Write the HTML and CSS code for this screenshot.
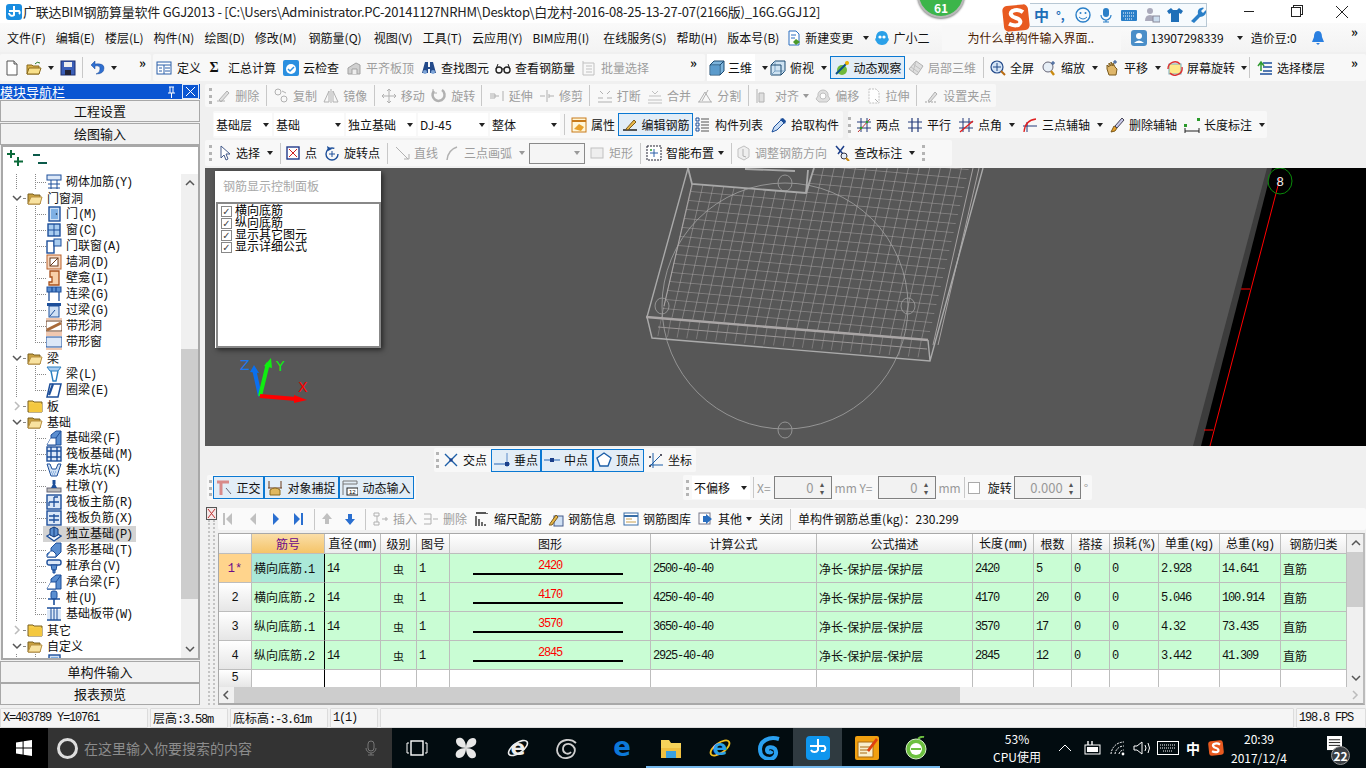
FILE: index.html
```html
<!DOCTYPE html>
<html lang="zh-CN">
<head>
<meta charset="utf-8">
<title>广联达BIM钢筋算量软件 GGJ2013</title>
<link rel="stylesheet" href="styles.css">
</head>
<body>
<svg class="defs" xmlns="http://www.w3.org/2000/svg">
<symbol id="logo" viewBox="0 0 16 16"><rect width="16" height="16" rx="3" fill="#1a8de0"/><path d="M8 2v9a3 3 0 0 1-5-2M3 7h10a2 2 0 0 1 0 3" fill="none" stroke="#fff" stroke-width="2"/></symbol>
<symbol id="doc" viewBox="0 0 16 16"><path d="M3 1h7l3 3v11H3z" fill="#fff" stroke="#555"/><path d="M10 1v3h3" fill="#ddd" stroke="#555"/></symbol>
<symbol id="open" viewBox="0 0 16 16"><path d="M1 5h5l1 1h6v8H1z" fill="#d9b24c" stroke="#8a6a1c"/><path d="M3 8h12l-2 6H1z" fill="#f8e08a" stroke="#8a6a1c"/><path d="M9 4q2-3 5-1" stroke="#2a7a2a" fill="none"/></symbol>
<symbol id="save" viewBox="0 0 16 16"><rect x="1" y="1" width="14" height="14" fill="#3b5fb8" stroke="#1d2f70"/><rect x="4" y="2" width="8" height="5" fill="#eee"/><rect x="5" y="10" width="6" height="5" fill="#223"/></symbol>
<symbol id="undo" viewBox="0 0 16 16"><path d="M6 1 2 5l4 4V6q5-1 5 3t-4 5q8 0 8-6 0-5-9-4z" fill="#2f6fd0" stroke="#1a4a9a" stroke-width=".5"/></symbol>
<symbol id="define" viewBox="0 0 16 16"><rect x="1" y="2" width="14" height="12" fill="#fff" stroke="#2a5fa8"/><path d="M1 5h14M8 5v9M9 8h5M9 11h5M3 8h3M3 11h3" stroke="#2a5fa8"/></symbol>
<symbol id="cloud" viewBox="0 0 16 16"><rect width="16" height="16" rx="2" fill="#2a8fe0"/><circle cx="8" cy="9" r="5" fill="#fff"/><path d="M5 9l2 2 4-4" fill="none" stroke="#2a8fe0" stroke-width="1.5"/></symbol>
<symbol id="align" viewBox="0 0 16 16"><path d="M2 14V8l8-5 4 2v9z" fill="#ccc" stroke="#999"/><path d="M6 14V9h5v5" fill="#eee" stroke="#999"/></symbol>
<symbol id="bino" viewBox="0 0 16 16"><path d="M4 2h3v5h2V2h3l3 11h-6V9H7v4H1z" fill="#234a8a"/><circle cx="4" cy="12" r="2" fill="#7fa6d8"/><circle cx="12" cy="12" r="2" fill="#7fa6d8"/></symbol>
<symbol id="glass" viewBox="0 0 16 16"><circle cx="4" cy="10" r="3" fill="none" stroke="#222" stroke-width="1.4"/><circle cx="12" cy="10" r="3" fill="none" stroke="#222" stroke-width="1.4"/><path d="M7 9h2M1 9l2-5M15 9l-2-5" stroke="#222" fill="none"/></symbol>
<symbol id="batch" viewBox="0 0 16 16"><path d="M2 1v14M2 3h11v12H2M5 6h6M5 9h6M5 12h6" fill="none" stroke="#bbb"/></symbol>
<symbol id="cube" viewBox="0 0 16 16"><path d="M1 5l4-4h10v10l-4 4H1z" fill="#7db4dc" stroke="#1d4a70"/><path d="M1 5h10v10M11 5l4-4" fill="none" stroke="#1d4a70"/><rect x="1.5" y="5.5" width="9" height="9" fill="#5b9bcc"/></symbol>
<symbol id="top" viewBox="0 0 16 16"><path d="M1 5l4-4h10v10l-4 4H1z" fill="#cfe3f2" stroke="#1d4a70"/><path d="M5 1v10H15M5 11l-4 4" fill="none" stroke="#7ca3c4"/><path d="M1 5h10v10" fill="none" stroke="#1d4a70"/></symbol>
<symbol id="orbit" viewBox="0 0 16 16"><circle cx="8" cy="10" r="5" fill="#6fb93a"/><path d="M2 14L14 2" stroke="#0a4e8a" stroke-width="2"/><circle cx="13" cy="3" r="2" fill="#f0b400"/></symbol>
<symbol id="cube3" viewBox="0 0 16 16"><path d="M8 1l7 5-6 9-8-6z" fill="#ddd" stroke="#aaa"/><path d="M5 4l7 5M3 7l7 5M8 1L5 12" stroke="#bbb" fill="none"/></symbol>
<symbol id="full" viewBox="0 0 16 16"><circle cx="7" cy="7" r="6" fill="#d4e4f6" stroke="#234a8a" stroke-width="1.2"/><path d="M7 3v8M3 7h8" stroke="#234a8a"/><path d="M11 11l4 4" stroke="#b86a10" stroke-width="2"/></symbol>
<symbol id="zoomi" viewBox="0 0 16 16"><circle cx="7" cy="7" r="5" fill="#e6eef6" stroke="#667"/><path d="M10 11l3 4" stroke="#c98a10" stroke-width="2.4"/><path d="M12 1v4M10 3h4" stroke="#234a8a"/></symbol>
<symbol id="hand" viewBox="0 0 16 16"><path d="M3 9V5l2 2V3l2 3V2l2 4V3l2 4 2 2-1 6H5z" fill="#dfb66a" stroke="#7a5a1c"/><path d="M11 0v4M9 2h4" stroke="#234a8a"/></symbol>
<symbol id="rotscr" viewBox="0 0 16 16"><rect x="2" y="4" width="12" height="10" fill="#ffe88a" stroke="#7ab"/><path d="M1 9a7 7 0 0 1 12-5M15 7a7 7 0 0 1-12 6" fill="none" stroke="#e03030" stroke-width="1.4"/></symbol>
<symbol id="floors" viewBox="0 0 16 16"><path d="M6 3h9M6 7h9M6 11h9M3 14h12" stroke="#1d4f9a" stroke-width="1.6"/><path d="M4 2v9M1 6l3-4 3 4" fill="none" stroke="#2f9a2f" stroke-width="1.5"/></symbol>
<symbol id="chg" viewBox="0 0 16 16"><path d="M3 1h7l3 3v11H3z" fill="#fff" stroke="#2a6fc0"/><path d="M5 5h5M5 8h4" stroke="#2a6fc0"/><path d="M10 9l4 3-4 3-3-3z" fill="#4a9a2a"/></symbol>
<symbol id="xe" viewBox="0 0 16 16"><path d="M8 1c5 0 6 4 6 7 1 0 1 3 0 3-1 3-4 4-6 4s-5-1-6-4c-1 0-1-3 0-3 0-3 1-7 6-7z" fill="#2aa0e8"/><circle cx="6" cy="7" r="1.6" fill="#fff"/><circle cx="10" cy="7" r="1.6" fill="#fff"/></symbol>
<symbol id="user" viewBox="0 0 16 16"><rect width="16" height="16" rx="3" fill="#4a8ec8"/><circle cx="8" cy="6" r="3" fill="#fff"/><path d="M3 13q5-5 10 0z" fill="#fff"/></symbol>
<symbol id="bell" viewBox="0 0 16 16"><path d="M8 1c3 0 4 3 4 6l2 5H2l2-5c0-3 1-6 4-6z" fill="#2a7fe0"/><path d="M6 13h4l-2 2z" fill="#2a7fe0"/></symbol>
<symbol id="erase" viewBox="0 0 16 16"><path d="M2 13h8M4 12l8-9 2 2-8 9z" fill="#ddd" stroke="#aaa"/></symbol>
<symbol id="copy" viewBox="0 0 16 16"><circle cx="5" cy="4" r="3" fill="none" stroke="#aaa"/><circle cx="11" cy="11" r="3" fill="none" stroke="#aaa"/><path d="M9 3l4 2" stroke="#aaa"/></symbol>
<symbol id="mirror" viewBox="0 0 16 16"><path d="M8 1v14M6 14H1L6 3zM10 14h5L10 3z" fill="none" stroke="#aaa"/></symbol>
<symbol id="move" viewBox="0 0 16 16"><path d="M8 1v14M1 8h14M6 3l2-2 2 2M6 13l2 2 2-2M3 6L1 8l2 2M13 6l2 2-2 2" fill="none" stroke="#aaa"/></symbol>
<symbol id="rot" viewBox="0 0 16 16"><path d="M3 3a6 6 0 1 0 8-1" fill="none" stroke="#aaa" stroke-width="2.5"/><path d="M2 1v4h4" fill="none" stroke="#aaa"/></symbol>
<symbol id="ext" viewBox="0 0 16 16"><path d="M14 3v10M1 8h9M1 6h5v4H1" fill="none" stroke="#aaa"/></symbol>
<symbol id="trim" viewBox="0 0 16 16"><path d="M8 2v12M1 8h5M10 8h5M10 6v4" fill="none" stroke="#aaa"/></symbol>
<symbol id="brk" viewBox="0 0 16 16"><path d="M1 10h5M10 10h5M1 14h14M3 3l3 3M13 3l-3 3" fill="none" stroke="#aaa"/></symbol>
<symbol id="merge" viewBox="0 0 16 16"><path d="M1 12h14M1 15h14M5 3l3 3 3-3M2 8h12" fill="none" stroke="#bbb"/></symbol>
<symbol id="split" viewBox="0 0 16 16"><path d="M1 14h14M2 14L8 4l6 10M11 2L5 13" fill="none" stroke="#aaa"/></symbol>
<symbol id="alg" viewBox="0 0 16 16"><path d="M2 1v14M4 5h5v9H4z" fill="#ddd" stroke="#aaa"/></symbol>
<symbol id="off" viewBox="0 0 16 16"><path d="M8 2a5 5 0 0 1 5 6l2 3-3 3H4l-3-3 2-3a5 5 0 0 1 5-6z" fill="#ddd" stroke="#bbb"/><circle cx="8" cy="8" r="3" fill="#fff" stroke="#bbb"/></symbol>
<symbol id="str" viewBox="0 0 16 16"><path d="M3 1h7l3 3v11H3z" fill="#fff" stroke="#bbb" stroke-dasharray="2 1"/><path d="M9 11l3 3" stroke="#aaa"/></symbol>
<symbol id="grip" viewBox="0 0 16 16"><path d="M2 14h12" stroke="#999" stroke-dasharray="2 1"/><path d="M5 13l7-9 2 2-7 8z" fill="#ddd" stroke="#aaa"/></symbol>
<symbol id="prop" viewBox="0 0 16 16"><rect x="1" y="1" width="14" height="14" fill="#fff6d8" stroke="#c87a1a"/><path d="M1 4h14" stroke="#c87a1a" stroke-width="2"/><path d="M3 12l5-5 5 3-3 4z" fill="#e8a02a"/></symbol>
<symbol id="edit" viewBox="0 0 16 16"><path d="M1 13h14" stroke="#222" stroke-width="1.5"/><path d="M4 12l8-9 2 2-8 8z" fill="#e8b84a" stroke="#7a5a1c"/></symbol>
<symbol id="list" viewBox="0 0 16 16"><path d="M1 1h3v3H1zM1 6h3v3H1zM1 11h3v3H1z" fill="none" stroke="#1d4f9a"/><path d="M6 2h8M6 5h8M6 8h8M6 11h8M6 14h8" stroke="#555"/></symbol>
<symbol id="pick" viewBox="0 0 16 16"><path d="M1 15l2-5 7-7 3 3-7 7z" fill="#c8dcf4" stroke="#1d4f9a"/><path d="M9 2l3-1 3 3-1 3z" fill="#1d4f9a"/></symbol>
<symbol id="twop" viewBox="0 0 16 16"><path d="M5 1v14M11 1v14M1 5h14M1 11h14" stroke="#243a7a"/><path d="M2 15L14 2" stroke="#c03030"/><circle cx="5" cy="11" r="1.3" fill="#2a9a2a"/><circle cx="11" cy="5" r="1.3" fill="#2a9a2a"/></symbol>
<symbol id="para" viewBox="0 0 16 16"><path d="M5 1v14M11 1v14M1 5h14M1 11h14" stroke="#243a7a" stroke-width="1.2"/></symbol>
<symbol id="angle" viewBox="0 0 16 16"><path d="M5 1v14M11 1v14M1 5h14M1 11h14" stroke="#243a7a"/><path d="M2 15L15 4" stroke="#e02020" stroke-width="1.4"/></symbol>
<symbol id="arc" viewBox="0 0 16 16"><path d="M5 15V5M1 9h14" stroke="#243a7a"/><path d="M2 15Q3 3 14 2" fill="none" stroke="#e02020" stroke-width="1.3"/></symbol>
<symbol id="delax" viewBox="0 0 16 16"><path d="M2 15l3-6 3 2-2 3z" fill="#e8a02a" stroke="#7a5a1c"/><path d="M6 9l7-8 2 2-7 8z" fill="#c8c8e8" stroke="#445"/></symbol>
<symbol id="dim" viewBox="0 0 16 16"><path d="M1 14h14M1 11v5M15 11v5" stroke="#222"/><rect x="0" y="7" width="3" height="3" fill="#2a9a2a"/><rect x="13" y="1" width="3" height="3" fill="#2a9a2a"/></symbol>
<symbol id="cur" viewBox="0 0 16 16"><path d="M5 1v12l3-3 2 5 2-1-2-5h4z" fill="#fff" stroke="#445a8a"/></symbol>
<symbol id="pt" viewBox="0 0 16 16"><rect x="2" y="2" width="12" height="12" fill="#fff" stroke="#223a8a" stroke-width="1.4"/><path d="M4 4l8 8M12 4l-8 8" stroke="#d02020"/></symbol>
<symbol id="rpt" viewBox="0 0 16 16"><circle cx="8" cy="9" r="6" fill="none" stroke="#1d4f9a" stroke-width="1.4" stroke-dasharray="30 8"/><path d="M8 6v6M5 9h6" stroke="#1d4f9a"/><path d="M3 1l1 5 4-2z" fill="#1d4f9a"/></symbol>
<symbol id="ln" viewBox="0 0 16 16"><path d="M2 2l12 12M10 14h5V9" fill="none" stroke="#aaa"/></symbol>
<symbol id="arc3" viewBox="0 0 16 16"><path d="M3 15Q4 5 13 2" fill="none" stroke="#aaa" stroke-width="1.5"/></symbol>
<symbol id="rect" viewBox="0 0 16 16"><rect x="2" y="3" width="12" height="10" fill="#eee" stroke="#bbb"/></symbol>
<symbol id="smart" viewBox="0 0 16 16"><rect x="1" y="1" width="14" height="14" fill="#fff" stroke="#223" stroke-dasharray="2 1"/><path d="M8 4v8M4 8h8" stroke="#2a5fa8"/><circle cx="5" cy="5" r="1" fill="#2a9a2a"/></symbol>
<symbol id="adj" viewBox="0 0 16 16"><path d="M3 4l6-3 5 3v8l-5 3-6-3z" fill="#eee" stroke="#bbb"/><path d="M8 4v7l3 1" stroke="#aaa" fill="none"/></symbol>
<symbol id="mark" viewBox="0 0 16 16"><path d="M2 1l7 8M10 1L4 9" stroke="#1d3f8a" stroke-width="1.5"/><circle cx="10" cy="11" r="3" fill="#e6eef6" stroke="#334"/><path d="M12 13l3 3" stroke="#c98a10" stroke-width="2"/></symbol>
<symbol id="cross" viewBox="0 0 16 16"><path d="M2 2l12 12M14 2L2 14" stroke="#1d5fa8" stroke-width="1.4"/><rect x="6.5" y="6.5" width="3" height="3" fill="#1a3f8a"/></symbol>
<symbol id="perp" viewBox="0 0 16 16"><path d="M0 12h16" stroke="#5a8ac8" stroke-width="1.4"/><path d="M13 1v14" stroke="#5a8ac8"/><rect x="11" y="10" width="4" height="4" fill="#1a3f8a"/></symbol>
<symbol id="mid" viewBox="0 0 16 16"><path d="M0 8h16" stroke="#5a8ac8" stroke-width="1.4"/><rect x="6" y="6" width="4" height="4" fill="#1a3f8a"/></symbol>
<symbol id="vtx" viewBox="0 0 16 16"><path d="M8 1l7 5-3 8H4L1 6z" fill="#fff" stroke="#1d5fa8" stroke-width="1.4"/></symbol>
<symbol id="coord" viewBox="0 0 16 16"><path d="M2 13h13M5 1v15M3 13l9-9" fill="none" stroke="#1d5fa8"/><circle cx="2" cy="5" r="1" fill="#223"/><circle cx="13" cy="3" r="1" fill="#223"/><circle cx="2" cy="14" r="1" fill="#223"/></symbol>
<symbol id="orth" viewBox="0 0 16 16"><path d="M1 2h12M5 2v13" stroke="#d88a8a" stroke-width="3"/><path d="M10 8l5 6" stroke="#667"/></symbol>
<symbol id="osnap" viewBox="0 0 16 16"><path d="M2 1v7M14 1v7M1 8h14" stroke="#6a3a1a"/><path d="M3 10q5-4 10 0v5H3z" fill="#e0b860" stroke="#8a6a1c"/></symbol>
<symbol id="first" viewBox="0 0 16 16"><path d="M4 2h2v12H4zM13 2v12L7 8z" fill="currentColor"/></symbol>
<symbol id="prev" viewBox="0 0 16 16"><path d="M11 2v12L5 8z" fill="currentColor"/></symbol>
<symbol id="next" viewBox="0 0 16 16"><path d="M5 2v12l6-6z" fill="currentColor"/></symbol>
<symbol id="last" viewBox="0 0 16 16"><path d="M3 2v12l6-6zM10 2h2v12h-2z" fill="currentColor"/></symbol>
<symbol id="up" viewBox="0 0 16 16"><path d="M8 2l5 6h-3v5H6V8H3z" fill="currentColor"/></symbol>
<symbol id="down" viewBox="0 0 16 16"><path d="M8 14l5-6h-3V3H6v5H3z" fill="currentColor"/></symbol>
<symbol id="ins" viewBox="0 0 16 16"><path d="M1 2h5v3H1zM1 11h5v3H1zM4 5v6M9 8h6M13 6v4" fill="none" stroke="#aaa"/></symbol>
<symbol id="dele" viewBox="0 0 16 16"><path d="M1 3h7M1 13h7M8 3v10M1 8h7M10 8h5" fill="none" stroke="#aaa"/></symbol>
<symbol id="scale" viewBox="0 0 16 16"><path d="M2 2h10M13 2v1M2 5v10M5 8v7M8 11v4M11 13v2" stroke="#222" stroke-width="1.3"/></symbol>
<symbol id="info" viewBox="0 0 16 16"><rect x="6" y="5" width="9" height="10" fill="#cfe0f4" stroke="#445a8a"/><path d="M1 14l7-10 2 2-6 8z" fill="#e8b84a" stroke="#7a5a1c"/></symbol>
<symbol id="lib" viewBox="0 0 16 16"><rect x="1" y="2" width="14" height="12" fill="#fff" stroke="#3a6fa8"/><path d="M1 5h14" stroke="#3a6fa8" stroke-width="2"/><path d="M3 8h6M3 11h10" stroke="#c8a050"/></symbol>
<symbol id="oth" viewBox="0 0 16 16"><rect x="1" y="2" width="11" height="11" fill="#fff" stroke="#778"/><path d="M5 5h3V3l6 5-6 5v-2H5z" fill="#2a6fc0"/></symbol>
<symbol id="fo" viewBox="0 0 16 16"><path d="M1 4h5l1 1h6v9H1z" fill="#c8a040" stroke="#7a6020"/><path d="M4 7h11l-2 7H1z" fill="#f8e2a0" stroke="#b89040"/></symbol>
<symbol id="fc" viewBox="0 0 16 16"><path d="M1 3h5l1 1h8v10H1z" fill="#f6cc4a" stroke="#7a6020"/><path d="M2 6h13v8H2z" fill="#f4c840"/></symbol>
<symbol id="chd" viewBox="0 0 10 10"><path d="M1 3l4 4 4-4" fill="none" stroke="#555" stroke-width="1.5"/></symbol>
<symbol id="chr" viewBox="0 0 10 10"><path d="M3 1l4 4-4 4" fill="none" stroke="#bbb" stroke-width="1.5"/></symbol>
<symbol id="chl" viewBox="0 0 10 10"><path d="M7 1L3 5l4 4" fill="none" stroke="#555" stroke-width="1.5"/></symbol>
<symbol id="chu" viewBox="0 0 10 10"><path d="M1 7l4-4 4 4" fill="none" stroke="#555" stroke-width="1.5"/></symbol>
<symbol id="t-mason" viewBox="0 0 16 16"><rect x="1" y="1" width="14" height="5" fill="#dce8f8" stroke="#1d4f9a"/><path d="M5 6v9M11 6v9M2 10h12M2 14h12" stroke="#1d4f9a"/></symbol>
<symbol id="t-door" viewBox="0 0 16 16"><rect x="3" y="1" width="11" height="14" fill="#cfe0f4" stroke="#1d4f9a" stroke-width="1.4"/><rect x="5" y="3" width="7" height="10" fill="#7fb0e4"/><circle cx="10.5" cy="8" r=".8" fill="#123"/></symbol>
<symbol id="t-win" viewBox="0 0 16 16"><rect x="2" y="2" width="12" height="12" fill="#a8ccf0" stroke="#1d4f9a" stroke-width="1.4"/><path d="M8 2v12M2 8h12" stroke="#1d4f9a"/></symbol>
<symbol id="t-dw" viewBox="0 0 16 16"><rect x="1" y="3" width="7" height="12" fill="#fff" stroke="#1d4f9a" stroke-width="1.4"/><rect x="8" y="1" width="7" height="7" fill="#a8ccf0" stroke="#1d4f9a"/></symbol>
<symbol id="t-hole" viewBox="0 0 16 16"><rect x="1" y="1" width="14" height="14" fill="#f8d8c0" stroke="#b8602a"/><rect x="4" y="4" width="8" height="8" fill="#fff" stroke="#6a3a1a"/><path d="M4 12l8-8" stroke="#6a3a1a"/></symbol>
<symbol id="t-niche" viewBox="0 0 16 16"><path d="M4 1h9v14H3v-3h3V7H4z" fill="#f8d0a8" stroke="#a8501a" stroke-width="1.3"/></symbol>
<symbol id="t-link" viewBox="0 0 16 16"><rect x="1" y="1" width="14" height="5" fill="#5a8ed0" stroke="#1d4f9a"/><path d="M3 6v9M13 6v9M6 1v5M10 1v5" stroke="#1d4f9a" stroke-width="1.3"/></symbol>
<symbol id="t-lint" viewBox="0 0 16 16"><rect x="1" y="1" width="14" height="3" fill="#1d4f9a"/><rect x="3" y="4" width="10" height="11" fill="#cfe0f4" stroke="#1d4f9a"/><path d="M4 14l5-6" stroke="#1d4f9a"/></symbol>
<symbol id="t-shole" viewBox="0 0 16 16"><rect y="3" width="16" height="10" fill="#fff" stroke="#6a3a1a"/><path d="M1 12L15 5" stroke="#a86a3a" stroke-width="3"/><path d="M0 1h16M0 15h16" stroke="#f0c8b0" stroke-width="2"/></symbol>
<symbol id="t-swin" viewBox="0 0 16 16"><path d="M0 1h16M0 15h16" stroke="#f0c8b0" stroke-width="2"/><rect y="3" width="16" height="10" fill="#dce8f8" stroke="#1d4f9a"/></symbol>
<symbol id="t-beam" viewBox="0 0 16 16"><path d="M1 1h14l-3 4H4z" fill="#a8ccf0" stroke="#2a7fc0"/><path d="M5 5l2 10h3l2-10" fill="none" stroke="#2a7fc0" stroke-width="1.4"/></symbol>
<symbol id="t-ring" viewBox="0 0 16 16"><path d="M4 2h11l-3 13H1z" fill="#fff" stroke="#1d4f9a" stroke-width="1.5"/><path d="M3 13L7 2" stroke="#1d4f9a" stroke-width="2.2"/></symbol>
<symbol id="t-fb" viewBox="0 0 16 16"><path d="M1 15l4-7V5l5-4h5v14z" fill="#5a8ed0" stroke="#1d4f9a"/><path d="M1 15h9V8H5M10 8l5-7" fill="#fff" stroke="#1d4f9a"/></symbol>
<symbol id="t-raft" viewBox="0 0 16 16"><rect x="1" y="1" width="14" height="14" fill="#dce8f8" stroke="#1d4f9a" stroke-width="1.4"/><path d="M5 1v14M11 1v14M1 5h14M1 11h14" stroke="#1d4f9a" stroke-width="1.4"/></symbol>
<symbol id="t-pit" viewBox="0 0 16 16"><path d="M1 2h3l2 5h4l2-5h3l-4 12H5z" fill="#cfe0f4" stroke="#1d4f9a"/><path d="M5 10h6M6 12h4" stroke="#5a8ed0" stroke-dasharray="1 1"/></symbol>
<symbol id="t-pier" viewBox="0 0 16 16"><rect x="1" y="10" width="14" height="4" fill="#bbb" stroke="#667"/><path d="M5 10l2-4h2l2 4z" fill="#1d4f9a"/><rect x="6.5" y="2" width="3" height="4" fill="#1d4f9a"/></symbol>
<symbol id="t-main" viewBox="0 0 16 16"><rect x="1" y="1" width="14" height="14" fill="#dce8f8" stroke="#1d4f9a" stroke-width="1.4"/><path d="M8 3v10M3 8h10M8 3h4M3 8v4" fill="none" stroke="#1d4f9a" stroke-width="1.3"/></symbol>
<symbol id="t-neg" viewBox="0 0 16 16"><rect x="1" y="1" width="14" height="14" fill="#dce8f8" stroke="#1d4f9a" stroke-width="1.4"/><path d="M3 6h10M3 10h10M8 4v9" stroke="#1d4f9a" stroke-width="1.3"/></symbol>
<symbol id="t-iso" viewBox="0 0 16 16"><path d="M1 10l7-4 7 4-7 5z" fill="#f4f8ff" stroke="#1d4f9a" stroke-width="1.4"/><path d="M4 9V3l4-2 4 2v6l-4 2z" fill="#5a8ed0" stroke="#123a7a"/><path d="M8 1v10" stroke="#123a7a"/></symbol>
<symbol id="t-strip" viewBox="0 0 16 16"><path d="M1 15v-3l4-3V6l5-5h5v9l-5 5z" fill="#5a8ed0" stroke="#1d4f9a"/><path d="M1 15h9v-3L7 9H5" fill="#fff" stroke="#1d4f9a"/></symbol>
<symbol id="t-cap" viewBox="0 0 16 16"><rect x="1" y="2" width="14" height="5" rx="2" fill="#dce8f8" stroke="#1d4f9a" stroke-width="1.4"/><path d="M5 7h6l-1 5H6zM7 12h2v3H7z" fill="#5a8ed0" stroke="#1d4f9a"/></symbol>
<symbol id="t-pile" viewBox="0 0 16 16"><rect x="5" y="1" width="6" height="8" rx="2" fill="#5a8ed0" stroke="#1d4f9a"/><path d="M2 9h12M8 9v6" stroke="#1d4f9a" stroke-width="1.6"/></symbol>
<symbol id="t-band" viewBox="0 0 16 16"><path d="M1 2h14M1 14h14" stroke="#1d4f9a" stroke-width="1.6"/><rect x="1" y="4" width="14" height="9" fill="#dce8f8"/><path d="M8 2v12M5 2v12M11 2v12" stroke="#1d4f9a"/></symbol>
<symbol id="win" viewBox="0 0 16 16"><path d="M0 2.5l6.6-1v6H0zM7.6 1.3L16 0v7.5H7.6zM0 8.5h6.6v6l-6.6-1zM7.6 8.5H16V16l-8.4-1.3z" fill="#fff"/></symbol>
<symbol id="mic" viewBox="0 0 16 16"><rect x="5" y="1" width="6" height="10" rx="3" fill="none" stroke="#777"/><path d="M3 8a5 5 0 0 0 10 0M8 13v2M5 15h6" fill="none" stroke="#777"/></symbol>
<symbol id="tv" viewBox="0 0 22 16"><rect x="5" y="1" width="12" height="14" fill="none" stroke="#fff" stroke-width="1.4"/><path d="M3 3H1v10h2M19 3h2v10h-2" fill="none" stroke="#fff"/></symbol>
<symbol id="fan" viewBox="0 0 24 24"><path d="M12 12C6 12 2 9 2 5s5-4 7-2 3 5 3 9zM12 12c0-6 3-10 7-10s4 5 2 7-5 3-9 3zM12 12c6 0 10 3 10 7s-5 4-7 2-3-5-3-9zM12 12c0 6-3 10-7 10s-4-5-2-7 5-3 9-3z" fill="#e8e8e8"/></symbol>
<symbol id="spiral" viewBox="0 0 24 24"><path d="M21 7C16 2 6 3 3 10s2 13 9 12 10-8 6-12-10-2-10 3 6 6 8 3" fill="none" stroke="#cfcfcf" stroke-width="1.8"/></symbol>
<symbol id="fold" viewBox="0 0 24 24"><path d="M2 4h8l2 3h10v15H2z" fill="#f6d35a"/><rect x="2" y="12" width="20" height="10" fill="#f0c040"/><rect x="7" y="15" width="10" height="7" fill="#3aa0e0"/></symbol>
<symbol id="gb" viewBox="0 0 24 24"><path d="M22 3C12 0 3 5 3 13s6 10 10 10 8-5 5-10c-3-3-8-2-8 1s4 3 5 1" fill="none" stroke="#2aa0f0" stroke-width="4"/></symbol>
<symbol id="app" viewBox="0 0 24 24"><rect width="24" height="24" rx="4" fill="#0f96ee"/><path d="M12 3v11a4 4 0 0 1-7 0M4 10h14a3 3 0 0 1 0 5h-3" fill="none" stroke="#fff" stroke-width="2"/></symbol>
<symbol id="note" viewBox="0 0 24 24"><rect width="24" height="24" rx="2" fill="#f0a010"/><rect x="3" y="6" width="15" height="15" fill="#f8eecc" stroke="#a86a10"/><path d="M5 11h10M5 14h10M5 17h7" stroke="#a86a10"/><path d="M12 14l9-12 2 2-9 12z" fill="#e04010"/></symbol>
<symbol id="ge" viewBox="0 0 24 24"><circle cx="12" cy="13" r="10" fill="#6cc040" stroke="#d8f0c8"/><circle cx="12" cy="13" r="6" fill="#fff"/><path d="M7 13h10" stroke="#6cc040" stroke-width="2"/><path d="M14 3q3-3 6-2" fill="none" stroke="#6cc040" stroke-width="2"/></symbol>
<symbol id="bat" viewBox="0 0 22 16"><rect x="4" y="5" width="15" height="9" fill="none" stroke="#fff"/><rect x="6" y="7" width="11" height="5" fill="#fff"/><path d="M7 1v4M11 1v4" stroke="#fff" stroke-width="1.4"/></symbol>
<symbol id="wifi" viewBox="0 0 18 16"><path d="M2 14A13 13 0 0 1 15 2M6 14A9 9 0 0 1 15 6M10 14a5 5 0 0 1 5-4" fill="none" stroke="#fff" stroke-dasharray="2 1"/><circle cx="14" cy="14" r="1.4" fill="#fff"/></symbol>
<symbol id="vol" viewBox="0 0 18 16"><path d="M1 6h3l5-4v12l-5-4H1z" fill="none" stroke="#fff"/><path d="M12 5q2 3 0 6M15 3q3 5 0 10" fill="none" stroke="#fff"/></symbol>
<symbol id="kb" viewBox="0 0 22 16"><rect x=".5" y="1.5" width="21" height="13" fill="none" stroke="#fff"/><path d="M3 5h16M3 8h16M6 11h10" stroke="#fff" stroke-dasharray="1 1"/></symbol>
<symbol id="sogou" viewBox="0 0 24 24"><rect x="1" y="1" width="22" height="22" rx="4" fill="#e85a20" transform="rotate(-6 12 12)"/><path d="M18 7q-4-3-9-1c-3 2-1 5 3 6s5 4 2 6q-4 1-8-1" fill="none" stroke="#fff" stroke-width="3.4"/></symbol>
<symbol id="smile" viewBox="0 0 16 16"><circle cx="8" cy="8" r="7" fill="none" stroke="#2a7fc8" stroke-width="1.4"/><circle cx="5.5" cy="6" r="1" fill="#2a7fc8"/><circle cx="10.5" cy="6" r="1" fill="#2a7fc8"/><path d="M4 10q4 4 8 0" fill="none" stroke="#2a7fc8"/></symbol>
<symbol id="imic" viewBox="0 0 16 16"><rect x="5" y="1" width="6" height="9" rx="3" fill="#2a7fc8"/><path d="M3 8a5 5 0 0 0 10 0M8 13v2M5 15h6" fill="none" stroke="#2a7fc8" stroke-width="1.2"/></symbol>
<symbol id="ikb" viewBox="0 0 16 16"><rect y="3" width="16" height="11" rx="1" fill="#2a7fc8"/><path d="M2 6h12M2 9h12M4 12h8" stroke="#fff" stroke-dasharray="1 1"/></symbol>
<symbol id="iuser" viewBox="0 0 16 16"><circle cx="6" cy="4" r="3" fill="#aab"/><path d="M1 14q0-6 5-6t5 6z" fill="#aab"/><rect x="9" y="9" width="7" height="6" fill="#cde" stroke="#889"/></symbol>
<symbol id="shirt" viewBox="0 0 16 16"><path d="M4 1L0 4l2 3 2-1v9h8V6l2 1 2-3-4-3-2 2H6z" fill="#1f6fb8"/></symbol>
<symbol id="wrench" viewBox="0 0 16 16"><path d="M1 14l7-7q-1-5 3-6 2-1 3 0l-3 3 2 2 3-3q1 6-6 7l-6 6z" fill="#2a7fc8"/></symbol>
</svg>

<header class="title">
  <svg class="logo"><use href="#logo"/></svg>
  <span class="ttext">广联达BIM钢筋算量软件 GGJ2013 - [C:\Users\Administrator.PC-20141127NRHM\Desktop\白龙村-2016-08-25-13-27-07(2166版)_16G.GGJ12]</span>
  <div class="wctl">
    <span class="wmin"></span>
    <span class="wres"></span>
    <svg class="wclose" viewBox="0 0 12 12"><path d="M0 0l12 12M12 0L0 12" stroke="#222"/></svg>
  </div>
</header>

<div class="badge61"><span>61</span></div>
<div class="ime">
  <svg class="ime-s"><use href="#sogou"/></svg>
  <div class="ime-bar">
    <span class="ime-t">中</span><span class="ime-p">°,</span>
    <svg class="i"><use href="#smile"/></svg><svg class="i"><use href="#imic"/></svg><svg class="i"><use href="#ikb"/></svg><svg class="i"><use href="#iuser"/></svg><svg class="i"><use href="#shirt"/></svg><svg class="i"><use href="#wrench"/></svg>
  </div>
</div>

<nav class="menu">
  <span>文件(F)</span><span>编辑(E)</span><span>楼层(L)</span><span>构件(N)</span><span>绘图(D)</span><span>修改(M)</span><span class="pl2">钢筋量(Q)</span><span class="pl2">视图(V)</span><span>工具(T)</span><span>云应用(Y)</span><span>BIM应用(I)</span><span class="pl4">在线服务(S)</span><span>帮助(H)</span><span>版本号(B)</span>
  <span class="it mn3"><svg class="i"><use href="#chg"/></svg><span>新建变更</span></span><b class="dd"></b>
  <span class="it mn5"><svg class="i"><use href="#xe"/></svg><span>广小二</span></span>
  <span class="news">为什么单构件输入界面..</span>
  <span class="it"><svg class="i"><use href="#user"/></svg><span>13907298339</span></span><b class="dd pl3"></b>
  <span class="bean">造价豆:0</span>
  <svg class="i pl3"><use href="#bell"/></svg>
  <span class="more mright">»</span>
</nav>

<div class="bar1">
  <div class="chunk c-file">
    <svg class="i"><use href="#doc"/></svg><svg class="i"><use href="#open"/></svg><b class="dd"></b><svg class="i"><use href="#save"/></svg><i class="sp"></i><svg class="i"><use href="#undo"/></svg><b class="dd"></b><span class="more">»</span>
  </div>
  <div class="chunk c-main">
    <span class="it"><svg class="i"><use href="#define"/></svg><span>定义</span></span>
    <span class="it"><span class="sigma">Σ</span><span>汇总计算</span></span>
    <span class="it"><svg class="i"><use href="#cloud"/></svg><span>云检查</span></span>
    <span class="it off"><svg class="i"><use href="#align"/></svg><span>平齐板顶</span></span>
    <span class="it"><svg class="i"><use href="#bino"/></svg><span>查找图元</span></span>
    <span class="it mn1"><svg class="i"><use href="#glass"/></svg><span>查看钢筋量</span></span>
    <span class="it off mn1"><svg class="i"><use href="#batch"/></svg><span>批量选择</span></span>
    <span class="more mright">»</span>
  </div>
  <div class="chunk c-view">
    <span class="view3d"><span class="it"><svg class="i"><use href="#cube"/></svg><span>三维</span></span></span><b class="dd"></b>
    <span class="it mn5"><svg class="i"><use href="#top"/></svg><span>俯视</span></span><b class="dd"></b>
    <span class="it on w75 mn4"><svg class="i"><use href="#orbit"/></svg><span>动态观察</span></span>
    <span class="it off mn4"><svg class="i"><use href="#cube3"/></svg><span>局部三维</span></span>
    <i class="sp"></i>
    <span class="it mn1"><svg class="i"><use href="#full"/></svg><span>全屏</span></span>
    <span class="it"><svg class="i"><use href="#zoomi"/></svg><span>缩放</span></span><b class="dd"></b>
    <span class="it mn1"><svg class="i"><use href="#hand"/></svg><span>平移</span></span><b class="dd"></b>
    <span class="it mn1"><svg class="i"><use href="#rotscr"/></svg><span>屏幕旋转</span></span><b class="dd mn1"></b>
    <i class="sp mn5"></i>
    <span class="it"><svg class="i"><use href="#floors"/></svg><span>选择楼层</span></span>
    <span class="more mright">»</span>
  </div>
</div>

<div class="work">
  <aside class="side">
    <div class="side-head"><span>模块导航栏</span>
      <svg class="pin" viewBox="0 0 9 12"><path d="M2 1h5M3 1v6M6 1v6M1 7h7M4.5 7v5" stroke="#fff" fill="none"/></svg>
      <svg class="sx" viewBox="0 0 17 15"><rect x=".5" y=".5" width="16" height="14" fill="none" stroke="#dfe8f8"/><path d="M4 3l9 9M13 3l-9 9" stroke="#fff"/></svg>
    </div>
    <div class="sbtn">工程设置</div>
    <div class="sbtn">绘图输入</div>
    <div class="treebox">
      <div class="tree-tools">
        <svg class="pm" viewBox="0 0 16 16"><path d="M4 0v8M0 4h8M11 7v9M7 11.500h9" stroke="#0b6a3a" stroke-width="2"/></svg>
        <svg class="pm" viewBox="0 0 16 16"><path d="M1 5h7M6 13h9" stroke="#0b5a4a" stroke-width="2"/></svg>
      </div>
      <div class="tree-wrap">
        <div class="tree">
          <div class="n2"><svg class="i"><use href="#t-mason"/></svg><span>砌体加筋<i class="m">(Y)</i></span></div>
          <div class="n1"><svg class="ch"><use href="#chd"/></svg><svg class="i"><use href="#fo"/></svg><span>门窗洞</span></div>
          <div class="n2"><svg class="i"><use href="#t-door"/></svg><span>门<i class="m">(M)</i></span></div>
          <div class="n2"><svg class="i"><use href="#t-win"/></svg><span>窗<i class="m">(C)</i></span></div>
          <div class="n2"><svg class="i"><use href="#t-dw"/></svg><span>门联窗<i class="m">(A)</i></span></div>
          <div class="n2"><svg class="i"><use href="#t-hole"/></svg><span>墙洞<i class="m">(D)</i></span></div>
          <div class="n2"><svg class="i"><use href="#t-niche"/></svg><span>壁龛<i class="m">(I)</i></span></div>
          <div class="n2"><svg class="i"><use href="#t-link"/></svg><span>连梁<i class="m">(G)</i></span></div>
          <div class="n2"><svg class="i"><use href="#t-lint"/></svg><span>过梁<i class="m">(G)</i></span></div>
          <div class="n2"><svg class="i"><use href="#t-shole"/></svg><span>带形洞</span></div>
          <div class="n2 last"><svg class="i"><use href="#t-swin"/></svg><span>带形窗</span></div>
          <div class="n1"><svg class="ch"><use href="#chd"/></svg><svg class="i"><use href="#fo"/></svg><span>梁</span></div>
          <div class="n2"><svg class="i"><use href="#t-beam"/></svg><span>梁<i class="m">(L)</i></span></div>
          <div class="n2 last"><svg class="i"><use href="#t-ring"/></svg><span>圈梁<i class="m">(E)</i></span></div>
          <div class="n1"><svg class="ch"><use href="#chr"/></svg><svg class="i"><use href="#fc"/></svg><span>板</span></div>
          <div class="n1"><svg class="ch"><use href="#chd"/></svg><svg class="i"><use href="#fo"/></svg><span>基础</span></div>
          <div class="n2"><svg class="i"><use href="#t-fb"/></svg><span>基础梁<i class="m">(F)</i></span></div>
          <div class="n2"><svg class="i"><use href="#t-raft"/></svg><span>筏板基础<i class="m">(M)</i></span></div>
          <div class="n2"><svg class="i"><use href="#t-pit"/></svg><span>集水坑<i class="m">(K)</i></span></div>
          <div class="n2"><svg class="i"><use href="#t-pier"/></svg><span>柱墩<i class="m">(Y)</i></span></div>
          <div class="n2"><svg class="i"><use href="#t-main"/></svg><span>筏板主筋<i class="m">(R)</i></span></div>
          <div class="n2"><svg class="i"><use href="#t-neg"/></svg><span>筏板负筋<i class="m">(X)</i></span></div>
          <div class="n2 sel"><svg class="i"><use href="#t-iso"/></svg><span>独立基础<i class="m">(P)</i></span></div>
          <div class="n2"><svg class="i"><use href="#t-strip"/></svg><span>条形基础<i class="m">(T)</i></span></div>
          <div class="n2"><svg class="i"><use href="#t-cap"/></svg><span>桩承台<i class="m">(V)</i></span></div>
          <div class="n2"><svg class="i"><use href="#t-fb"/></svg><span>承台梁<i class="m">(F)</i></span></div>
          <div class="n2"><svg class="i"><use href="#t-pile"/></svg><span>桩<i class="m">(U)</i></span></div>
          <div class="n2 last"><svg class="i"><use href="#t-band"/></svg><span>基础板带<i class="m">(W)</i></span></div>
          <div class="n1"><svg class="ch"><use href="#chr"/></svg><svg class="i"><use href="#fc"/></svg><span>其它</span></div>
          <div class="n1"><svg class="ch"><use href="#chd"/></svg><svg class="i"><use href="#fo"/></svg><span>自定义</span></div>
          <div class="n2 clip"><svg class="i"><use href="#t-door"/></svg></div>
        </div>
        <div class="vsb tree-sb">
          <svg class="arw"><use href="#chu"/></svg>
          <div class="vsb-mid"><i class="thumb-tree"></i></div>
          <svg class="arw"><use href="#chd"/></svg>
        </div>
      </div>
    </div>
    <div class="sbtn s2">单构件输入</div>
    <div class="sbtn s2">报表预览</div>
  </aside>

  <main class="right">
    <div class="chunk row-a off-row">
      <i class="gr"></i>
      <span class="it off"><svg class="i"><use href="#erase"/></svg><span>删除</span></span><i class="sp"></i>
      <span class="it off"><svg class="i"><use href="#copy"/></svg><span>复制</span></span>
      <span class="it off"><svg class="i"><use href="#mirror"/></svg><span>镜像</span></span><i class="sp"></i>
      <span class="it off"><svg class="i"><use href="#move"/></svg><span>移动</span></span>
      <span class="it off"><svg class="i"><use href="#rot"/></svg><span>旋转</span></span><i class="sp"></i>
      <span class="it off"><svg class="i"><use href="#ext"/></svg><span>延伸</span></span>
      <span class="it off"><svg class="i"><use href="#trim"/></svg><span>修剪</span></span><i class="sp"></i>
      <span class="it off"><svg class="i"><use href="#brk"/></svg><span>打断</span></span>
      <span class="it off"><svg class="i"><use href="#merge"/></svg><span>合并</span></span>
      <span class="it off"><svg class="i"><use href="#split"/></svg><span>分割</span></span><i class="sp"></i>
      <span class="it off"><svg class="i"><use href="#alg"/></svg><span>对齐</span><b class="dd dd-g"></b></span>
      <span class="it off"><svg class="i"><use href="#off"/></svg><span>偏移</span></span>
      <span class="it off"><svg class="i"><use href="#str"/></svg><span>拉伸</span></span><i class="sp"></i>
      <span class="it off"><svg class="i"><use href="#grip"/></svg><span>设置夹点</span></span>
    </div>

    <div class="row-b">
      <div class="chunk b-left">
        <span class="cb"><span>基础层</span><b class="dd"></b></span>
        <span class="cb"><span>基础</span><b class="dd"></b></span>
        <span class="cb"><span>独立基础</span><b class="dd"></b></span>
        <span class="cb"><span>DJ-45</span><b class="dd"></b></span>
        <span class="cb"><span>整体</span><b class="dd"></b></span>
        <i class="sp"></i>
        <span class="it"><svg class="i"><use href="#prop"/></svg><span>属性</span></span>
        <span class="it on w75"><svg class="i"><use href="#edit"/></svg><span>编辑钢筋</span></span>
        <span class="it"><svg class="i"><use href="#list"/></svg><span>构件列表</span></span>
        <span class="it"><svg class="i"><use href="#pick"/></svg><span>拾取构件</span></span>
      </div>
      <div class="chunk b-right">
        <i class="gr"></i>
        <span class="it"><svg class="i"><use href="#twop"/></svg><span>两点</span></span>
        <span class="it"><svg class="i"><use href="#para"/></svg><span>平行</span></span>
        <span class="it"><svg class="i"><use href="#angle"/></svg><span>点角</span></span><b class="dd"></b>
        <span class="it"><svg class="i"><use href="#arc"/></svg><span>三点辅轴</span></span><b class="dd"></b>
        <span class="it mn1"><svg class="i"><use href="#delax"/></svg><span>删除辅轴</span></span>
        <span class="it"><svg class="i"><use href="#dim"/></svg><span>长度标注</span></span><b class="dd"></b>
      </div>
    </div>

    <div class="chunk row-c">
      <i class="gr"></i>
      <span class="it"><svg class="i"><use href="#cur"/></svg><span>选择</span></span><b class="dd"></b><i class="sp"></i>
      <span class="it g1 mn3"><svg class="i"><use href="#pt"/></svg><span>点</span></span>
      <span class="it"><svg class="i"><use href="#rpt"/></svg><span>旋转点</span></span><i class="sp"></i>
      <span class="it off mn1"><svg class="i"><use href="#ln"/></svg><span>直线</span></span>
      <span class="it off mn1"><svg class="i"><use href="#arc3"/></svg><span>三点画弧</span></span><b class="dd dd-g"></b>
      <span class="box56 mn3"><b class="dd dd-g"></b></span>
      <span class="it off mn3"><svg class="i"><use href="#rect"/></svg><span>矩形</span></span><i class="sp"></i>
      <span class="it mn2"><svg class="i"><use href="#smart"/></svg><span>智能布置</span><b class="dd"></b></span><i class="sp"></i>
      <span class="it off mn4"><svg class="i"><use href="#adj"/></svg><span>调整钢筋方向</span></span>
      <span class="it"><svg class="i"><use href="#mark"/></svg><span>查改标注</span></span><b class="dd"></b>
      <i class="gr"></i>
    </div>

    <section class="canvas">
      <svg class="scene" viewBox="205 168 1161 278">
        <defs>
          <pattern id="mesh" width="10" height="10" patternUnits="userSpaceOnUse" patternTransform="matrix(1.04 .09 -.21 .9 661 317)"><path d="M0 0H10M0 0V10" stroke="#aaa6a6" fill="none"/></pattern>
          <pattern id="front" width="9" height="22" patternUnits="userSpaceOnUse" patternTransform="matrix(1.07 .09 -.19 1 661 317)"><path d="M0 0V22" stroke="#9a9696" fill="none"/></pattern>
        </defs>
        <rect x="205" y="168" width="1161" height="278" fill="#575757"/>
        <path d="M1267 168H1366V446H1193z" fill="#3c3c3c"/>
        <path d="M1272 168H1366V446H1201z" fill="#000"/>
        <path d="M1280 178L1210 446" stroke="#f00" fill="none"/>
        <path d="M1241 289h9M1204 430h9" stroke="#f00"/>
        <ellipse cx="1280" cy="181" rx="12" ry="13" fill="none" stroke="#0a8a0a"/>
        <text x="1280" y="186" text-anchor="middle" class="t8">8</text>
        <circle cx="785" cy="306" r="123" fill="none" stroke="#949494"/>
        <ellipse cx="785" cy="430" rx="7" ry="8" fill="none" stroke="#949494"/>
        <ellipse cx="785" cy="183" rx="7" ry="8" fill="none" stroke="#949494"/>
        <ellipse cx="662" cy="306" rx="7" ry="8" fill="none" stroke="#949494"/>
        <ellipse cx="908" cy="306" rx="7" ry="8" fill="none" stroke="#949494"/>
        <path d="M692 184L806 193 814 168H969L928 340 661 317z" fill="url(#mesh)"/>
        <path d="M661 317L928 340 926 358 657 336z" fill="url(#front)"/>
        <path d="M658 327L927 349" stroke="#9a9696"/>
        <path d="M692 184L664 306" stroke="#aaa6a6"/>
        <path d="M973 168L933 345M979 168L938 345" stroke="#a5a1a1"/>
        <path d="M688 168L647 317 652 338 930 361 983 168M930 361L928 340M647 317L652 338" stroke="#aaa" stroke-width="1.4" fill="none"/>
        <path d="M646 317L928 340" stroke="#aaa6a6" stroke-width="2.4"/>
        <path d="M688 168L692 184 806 193 808 170M814 168L806 193M745 169L795 171" stroke="#a8a8a8" stroke-width="1.8" fill="none"/>
        <path d="M260 396L254 369" stroke="#0a70f0" stroke-width="4"/><path d="M250 372L254 365 259 373z" fill="#0a70f0"/>
        <path d="M260 396L268 363" stroke="#10ee10" stroke-width="4"/><path d="M264 366L271 358 272 368z" fill="#10ee10"/>
        <path d="M260 396L296 399" stroke="#f00" stroke-width="4"/><path d="M294 395L307 400 294 403z" fill="#f00"/>
        <text x="240" y="370" class="ax az">Z</text>
        <text x="276" y="371" class="ax ay">Y</text>
        <text x="298" y="392" class="ax ax-x">X</text>
      </svg>
      <div class="ctrl">
        <div class="ctrl-h">钢筋显示控制面板</div>
        <div class="ctrl-b">
          <label class="ck"><i class="cbx">✓</i><span>横向底筋</span></label>
          <label class="ck"><i class="cbx">✓</i><span>纵向底筋</span></label>
          <label class="ck"><i class="cbx">✓</i><span>显示其它图元</span></label>
          <label class="ck"><i class="cbx">✓</i><span>显示详细公式</span></label>
        </div>
      </div>
    </section>

    <div class="chunk snap">
      <i class="gr"></i>
      <span class="it"><svg class="i"><use href="#cross"/></svg><span>交点</span></span>
      <span class="it on w50"><svg class="i"><use href="#perp"/></svg><span>垂点</span></span><span class="it on w52"><svg class="i"><use href="#mid"/></svg><span>中点</span></span><span class="it on w51"><svg class="i"><use href="#vtx"/></svg><span>顶点</span></span>
      <span class="it"><svg class="i"><use href="#coord"/></svg><span>坐标</span></span>
    </div>

    <div class="row-o">
      <div class="chunk o-left">
        <i class="gr"></i>
        <span class="it on w51"><svg class="i"><use href="#orth"/></svg><span>正交</span></span><span class="it on w75"><svg class="i"><use href="#osnap"/></svg><span>对象捕捉</span></span><span class="it on w75"><svg class="i" viewBox="0 0 16 16"><path d="M1 1h14v3H1zM1 4v11" fill="none" stroke="#777"/><rect x="5" y="8" width="11" height="7" fill="#fff" stroke="#222"/><text x="7" y="14" font-size="6" font-family="Liberation Sans">12</text></svg><span>动态输入</span></span>
      </div>
      <div class="chunk o-right">
        <i class="gr"></i>
        <span class="cb cb58"><span>不偏移</span><b class="dd"></b></span>
        <i class="sp"></i>
        <span class="lbl">X=</span>
        <span class="spin w58"><span>0</span><i class="sbtns">▴<br>▾</i></span>
        <span class="lbl">mm Y=</span>
        <span class="spin w58 pl2"><span>0</span><i class="sbtns">▴<br>▾</i></span>
        <span class="lbl">mm</span>
        <i class="sp"></i>
        <i class="cbx cbx-g"></i>
        <span class="rot">旋转</span>
        <span class="spin w67"><span>0.000</span><i class="sbtns">▴<br>▾</i></span>
        <span class="lbl">°</span>
      </div>
    </div>

    <section class="editor">
      <div class="ed-grip">
        <svg class="ed-x" viewBox="0 0 11 13"><rect x=".5" y=".5" width="10" height="12" fill="#f4e8e8" stroke="#555"/><path d="M2 2l7 9M9 2l-7 9" stroke="#c03030"/></svg>
        <i class="ed-dots"></i>
      </div>
      <div class="ed-main">
        <div class="chunk ed-bar">
          <svg class="i c-g nav1"><use href="#first"/></svg>
          <svg class="i c-g"><use href="#prev"/></svg>
          <svg class="i c-b"><use href="#next"/></svg>
          <svg class="i c-b"><use href="#last"/></svg>
          <i class="sp"></i>
          <svg class="i c-g mn3"><use href="#up"/></svg>
          <svg class="i c-b"><use href="#down"/></svg>
          <i class="sp"></i>
          <span class="it off"><svg class="i"><use href="#ins"/></svg><span>插入</span></span>
          <span class="it off mn1"><svg class="i"><use href="#dele"/></svg><span>删除</span></span>
          <span class="it"><svg class="i"><use href="#scale"/></svg><span>缩尺配筋</span></span>
          <span class="it mn1"><svg class="i"><use href="#info"/></svg><span>钢筋信息</span></span>
          <span class="it"><svg class="i"><use href="#lib"/></svg><span>钢筋图库</span></span>
          <span class="it"><svg class="i"><use href="#oth"/></svg><span>其他</span><b class="dd"></b></span>
          <span>关闭</span>
          <i class="sp"></i>
          <span>单构件钢筋总重(kg)：230.299</span>
        </div>
        <div class="grid">
          <div class="grid-top">
            <table class="tbl">
              <colgroup><col class="c0"><col class="c1"><col class="c2"><col class="c3"><col class="c4"><col class="c5"><col class="c6"><col class="c7"><col class="c8"><col class="c9"><col class="c10"><col class="c11"><col class="c12"><col class="c13"><col class="c14"></colgroup>
              <thead>
                <tr><th></th><th class="hsel">筋号</th><th>直径<i class="m">(mm)</i></th><th>级别</th><th>图号</th><th>图形</th><th>计算公式</th><th>公式描述</th><th>长度<i class="m">(mm)</i></th><th>根数</th><th>搭接</th><th>损耗<i class="m">(%)</i></th><th>单重<i class="m">(kg)</i></th><th>总重<i class="m">(kg)</i></th><th>钢筋归类</th></tr>
              </thead>
              <tbody>
                <tr class="g"><th class="rsel">1*</th><td class="nsel">横向底筋<i class="m">.1</i></td><td class="m">14</td><td class="ct sym">虫</td><td class="m">1</td><td class="shape"><span class="dim">2420</span><i class="bar"></i></td><td class="m">2500-40-40</td><td>净长-保护层-保护层</td><td class="m">2420</td><td class="m">5</td><td class="m">0</td><td class="m">0</td><td class="m">2.928</td><td class="m">14.641</td><td>直筋</td></tr>
                <tr class="g"><th>2</th><td>横向底筋<i class="m">.2</i></td><td class="m">14</td><td class="ct sym">虫</td><td class="m">1</td><td class="shape"><span class="dim">4170</span><i class="bar"></i></td><td class="m">4250-40-40</td><td>净长-保护层-保护层</td><td class="m">4170</td><td class="m">20</td><td class="m">0</td><td class="m">0</td><td class="m">5.046</td><td class="m">100.914</td><td>直筋</td></tr>
                <tr class="g"><th>3</th><td>纵向底筋<i class="m">.1</i></td><td class="m">14</td><td class="ct sym">虫</td><td class="m">1</td><td class="shape"><span class="dim">3570</span><i class="bar"></i></td><td class="m">3650-40-40</td><td>净长-保护层-保护层</td><td class="m">3570</td><td class="m">17</td><td class="m">0</td><td class="m">0</td><td class="m">4.32</td><td class="m">73.435</td><td>直筋</td></tr>
                <tr class="g"><th>4</th><td>纵向底筋<i class="m">.2</i></td><td class="m">14</td><td class="ct sym">虫</td><td class="m">1</td><td class="shape"><span class="dim">2845</span><i class="bar"></i></td><td class="m">2925-40-40</td><td>净长-保护层-保护层</td><td class="m">2845</td><td class="m">12</td><td class="m">0</td><td class="m">0</td><td class="m">3.442</td><td class="m">41.309</td><td>直筋</td></tr>
                <tr class="e"><th>5</th><td></td><td></td><td></td><td></td><td></td><td></td><td></td><td></td><td></td><td></td><td></td><td></td><td></td><td></td></tr>
              </tbody>
            </table>
            <div class="vsb grid-sb">
              <svg class="arw"><use href="#chu"/></svg>
              <div class="vsb-mid"><i class="thumb-grid"></i></div>
              <svg class="arw"><use href="#chd"/></svg>
            </div>
          </div>
          <div class="hsb">
            <svg class="arw"><use href="#chl"/></svg>
            <div class="hsb-mid"><i class="thumb-h"></i></div>
            <svg class="arw"><use href="#chr"/></svg>
          </div>
        </div>
      </div>
    </section>
  </main>
</div>

<footer class="status">
  <span class="st st1 m">X=403789 Y=10761</span>
  <span class="st st2">层高<i class="m">:3.58m</i></span>
  <span class="st st3">底标高<i class="m">:-3.61m</i></span>
  <span class="st st4 m">1(1)</span>
  <span class="st st5"></span>
  <span class="st st6 m">198.8 FPS</span>
</footer>

<div class="taskbar">
  <div class="start"><svg class="winl"><use href="#win"/></svg></div>
  <div class="search">
    <i class="cortana"></i>
    <span>在这里输入你要搜索的内容</span>
    <svg class="tmic"><use href="#mic"/></svg>
  </div>
  <div class="tk"><svg class="tvi"><use href="#tv"/></svg></div>
  <div class="tk"><svg class="ti"><use href="#fan"/></svg></div>
  <div class="tk tk3"><svg class="ti" viewBox="0 0 24 24"><ellipse cx="12" cy="12" rx="11" ry="5" fill="none" stroke="#eee" stroke-width="1.6" transform="rotate(-35 12 12)"/><text x="12" y="19" text-anchor="middle" font-size="22" font-weight="700" font-family="DejaVu Sans" fill="#eee">e</text></svg></div>
  <div class="tk"><svg class="ti"><use href="#spiral"/></svg></div>
  <div class="tk tk6"><svg class="ti" viewBox="0 0 24 24"><text x="12" y="20" text-anchor="middle" font-size="26" font-weight="700" font-family="DejaVu Sans" fill="#0c78d8">e</text></svg></div>
  <div class="tk ul"><svg class="ti"><use href="#fold"/></svg></div>
  <div class="tk ul"><svg class="ti" viewBox="0 0 24 24"><ellipse cx="12" cy="12" rx="11" ry="5" fill="none" stroke="#f0c020" stroke-width="1.8" transform="rotate(-35 12 12)"/><text x="12" y="19" text-anchor="middle" font-size="22" font-weight="700" font-family="DejaVu Sans" fill="#2aa0e8">e</text></svg></div>
  <div class="tk ul"><svg class="ti"><use href="#gb"/></svg></div>
  <div class="tk ul act"><svg class="ti"><use href="#app"/></svg></div>
  <div class="tk ul"><svg class="ti"><use href="#note"/></svg></div>
  <div class="tk ul"><svg class="ti"><use href="#ge"/></svg></div>
  <div class="cpu"><span>53%</span><span>CPU使用</span></div>
  <div class="tray">
    <svg class="caret" viewBox="0 0 14 8"><path d="M1 7l6-6 6 6" fill="none" stroke="#fff"/></svg>
    <svg class="tr22"><use href="#bat"/></svg>
    <svg class="tr18"><use href="#wifi"/></svg>
    <svg class="tr18"><use href="#vol"/></svg>
    <svg class="tr22"><use href="#kb"/></svg>
    <span class="zh">中</span>
    <svg class="tr18"><use href="#sogou"/></svg>
  </div>
  <div class="clock"><span>20:39</span><span>2017/12/4</span></div>
  <div class="notif">
    <svg class="nico" viewBox="0 0 16 16"><path d="M0 0h16v15H0z" fill="#fff"/><path d="M2 4h12M2 7h12M2 10h12" stroke="#111"/></svg>
    <span class="nbadge">22</span>
  </div>
</div>
</body>
</html>
```
FILE: styles.css
```css
* { box-sizing: border-box; }
html, body { margin: 0; padding: 0; }
body {
  width: 1366px; height: 768px; overflow: hidden; position: relative;
  background: #f0f0f0; color: #111;
  font: 12px/16px "Noto Sans CJK SC", "Liberation Sans", sans-serif;
}
.defs { position: absolute; width: 0; height: 0; }
i { font-style: normal; }
b { font-weight: normal; }
.m { font-family: "Liberation Mono", "Noto Sans CJK SC", monospace; letter-spacing: -1.2px; font-size: 12px; }

/* small nudges */
.mn1 { margin-left: -1px; }
.mn2 { margin-left: -2px; }
.mn3 { margin-left: -3px; }
.mn4 { margin-left: -4px; }
.mn5 { margin-left: -5px; }
.pl2 { margin-left: 2px; }
.pl3 { margin-left: 3px; }
.pl4 { margin-left: 4px; }
.g1 { gap: 1px; }

/* title */
.title { height: 23px; background: #fff; display: flex; align-items: center; padding-left: 6px; }
.logo { width: 16px; height: 16px; margin-right: 1px; flex: none; }
.ttext { font-size: 13px; white-space: nowrap; color: #222; letter-spacing: -.24px; }
.wctl { margin-left: auto; display: flex; align-items: center; margin-right: 18px; }
.wmin { width: 10px; height: 1px; background: #222; margin-right: 37px; }
.wres { width: 10px; height: 10px; border: 1px solid #222; margin-right: 35px; box-shadow: 2px -2px 0 -1px #fff, 2px -2px 0 0 #222; }
.wclose { width: 12px; height: 12px; }

/* overlays at the top */
.badge61 { position: absolute; left: 917px; top: -30px; width: 48px; height: 48px; border-radius: 50%; background: #3cb54a; border: 2px solid #b8b8b8; box-shadow: 0 1px 2px #888; color: #fff; text-align: center; z-index: 5; }
.badge61 span { display: block; margin-top: 28px; line-height: 16px; font-weight: 700; }
.ime { position: absolute; left: 1002px; top: 3px; display: flex; z-index: 6; }
.ime-s { width: 28px; height: 30px; }
.ime-bar { width: 177px; height: 24px; background: #f6fafd; border: 1px solid #b8c8d4; border-left: 0; display: flex; align-items: center; gap: 7px; padding-left: 4px; }
.ime-t { color: #1f6fb8; font-size: 15px; font-weight: 700; }
.ime-p { color: #1f6fb8; font-weight: 700; width: 14px; }

/* menu */
.menu { height: 29px; display: flex; align-items: center; gap: 10px; padding-left: 7px; background: linear-gradient(#fafafa, #f3f3f3); white-space: nowrap; }
.menu .it { gap: 3px; }
.news { margin-left: 3px; padding: 0 0 0 25px; width: 179px; height: 26px; line-height: 26px; background: #f8f8f8; color: #4a2000; font-size: 12px; }
.bean { margin-left: -2px; }
.more { font-size: 13px; line-height: 12px; margin-left: 0; font-weight: 700; align-self: flex-start; margin-top: 3px; }
.mright { margin-left: auto; margin-right: 8px; }

/* shared toolbar parts */
.chunk { display: flex; align-items: center; gap: 7px; background: #f8f8f8; border-radius: 2px; white-space: nowrap; }
.it { display: inline-flex; align-items: center; gap: 4px; flex: none; }
.i { width: 16px; height: 16px; flex: none; }
.off { color: #9d9d9d; }
.off .i { opacity: .9; }
.dd { flex: none; width: 0; height: 0; border-left: 3px solid transparent; border-right: 3px solid transparent; border-top: 4px solid #222; }
.dd-g { border-top-color: #999; }
.sp { flex: none; width: 1px; height: 21px; background: #c8c8c8; }
.gr { flex: none; width: 3px; height: 16px; border-left: 3px dotted #b4b4b4; }
.on { justify-content: center; height: 23px; background: #e2edf7; border: 1px solid #0a78d2; }
.w50 { width: 50px; }
.w51 { width: 51px; }
.w52 { width: 52px; }
.w75 { width: 75px; }
.sigma { width: 12px; margin-right: 4px; font: 700 14px/16px "Liberation Serif", serif; text-align: center; }
.cb { display: flex; align-items: center; justify-content: space-between; width: 70px; height: 23px; padding: 0 3px 0 2px; background: #fff; flex: none; }
.cb58 { width: 58px; }

.bar1 { height: 27px; margin-top: 2px; display: flex; gap: 2px; }
.c-file { width: 151px; padding-left: 4px; gap: 6px; }
.c-file .more { margin-left: auto; margin-right: 5px; }
.c-main { width: 552px; padding-left: 3px; }
.c-main .it:first-child { gap: 5px; }
.c-view { flex: 1; min-width: 0; gap: 7px; }
.view3d { background: #fff; height: 27px; display: flex; align-items: center; padding: 0 4px 0 2px; width: 48px; }
.view3d .it { gap: 3px; }

/* layout */
.work { margin-top: 3px; height: 624px; display: flex; gap: 5px; }
.side { width: 200px; flex: none; display: flex; flex-direction: column; }
.right { flex: 1; min-width: 0; display: flex; flex-direction: column; }

/* sidebar */
.side-head { height: 15px; background: #0a55d2; color: #fff; display: flex; align-items: center; font-size: 13px; line-height: 15px; flex: none; }
.side-head span:first-child { margin-right: auto; }
.pin { width: 9px; height: 12px; margin-right: 6px; }
.sx { width: 17px; height: 15px; margin-right: 1px; }
.sbtn { height: 22px; line-height: 20px; text-align: center; background: #f2f2f2; border: 1px solid #a8a8a8; margin-top: 1px; font-size: 13px; flex: none; }
.s2 { margin-top: 0; }
.treebox { height: 515px; flex: none; background: #fff; border: 2px solid #a8a8a8; margin: 0 0 1px 1px; display: flex; flex-direction: column; }
.tree-tools { height: 27px; padding: 3px 0 0 4px; display: flex; gap: 9px; flex: none; }
.pm { width: 16px; height: 16px; }
.tree-wrap { flex: 1; min-height: 0; display: flex; overflow: hidden; }
.tree { flex: 1; min-width: 0; overflow: hidden; font-family: "Liberation Mono", "Noto Sans CJK SC", monospace; }
.n1, .n2 { height: 16px; display: flex; align-items: center; white-space: nowrap; }
.n1 { padding-left: 9px; background: linear-gradient(#888, #888) 20px 8px / 3px 1px no-repeat; }
.ch { width: 10px; height: 10px; margin-right: 5px; flex: none; }
.n1 .i { margin-right: 4px; }
.n1 span { font-family: "Noto Sans CJK SC", sans-serif; font-size: 12px; line-height: 14px; }
.n2 { padding-left: 43px;
  background-image: repeating-linear-gradient(#888 0 1px, transparent 1px 2px), repeating-linear-gradient(#888 0 1px, transparent 1px 2px), repeating-linear-gradient(90deg, #888 0 1px, transparent 1px 2px);
  background-size: 1px 100%, 1px 100%, 11px 1px;
  background-position: 13px 0, 32px 0, 32px 8px;
  background-repeat: no-repeat; }
.n2.last { background-size: 1px 100%, 1px 9px, 11px 1px; }
.n2 .i { margin-right: 4px; }
.n2 span { line-height: 18px; height: 16px; }
.sel span { flex: none; width: 70px; background: #d3d3d3; }
.n2.sel .i { background: #d3d3d3; width: 20px; margin-right: 0; padding-right: 4px; box-shadow: -3px 0 0 #d3d3d3; }

.vsb { flex: none; width: 17px; display: flex; flex-direction: column; background: #f0f0f0; align-items: center; }
.arw { width: 10px; height: 10px; flex: none; margin: 4px 0; }
.vsb-mid { flex: 1; width: 100%; min-height: 0; display: flex; flex-direction: column; }
.tree-sb { height: 100%; }
.thumb-tree { display: block; height: 250px; margin-top: 157px; background: #cdcdcd; }
.thumb-grid { display: block; height: 55px; background: #cdcdcd; }

/* right rows */
.row-a { height: 23px; width: 791px; padding-left: 4px; gap: 6.3px; flex: none; }
.row-a .gr { margin-right: -3px; }
.row-b { height: 27px; margin-top: 4px; display: flex; gap: 5px; padding-left: 8px; flex: none; }
.b-left { width: 630px; gap: 2px; padding-left: 1px; }
.b-left .cb:first-child { width: 58px; }
.b-left .sp { margin-left: 2px; }
.b-left .it { margin-left: 4px; }
.b-left .on { margin-left: 1px; }
.b-left .on + .it { margin-left: 0; }
.b-left .on + .it + .it { margin-left: 6px; }
.b-right { width: 419px; padding-left: 0; }
.b-right .gr { margin-right: -2px; }
.row-c { height: 26px; width: 747px; margin-top: 2px; padding-left: 4px; gap: 7px; flex: none; }
.row-c > .gr:first-child { margin-right: -3px; }
.box56 { width: 56px; height: 21px; border: 1px solid #8a8a8a; background: #f5f5f5; display: flex; align-items: center; justify-content: flex-end; padding-right: 4px; flex: none; }

.canvas { position: relative; height: 278px; margin-top: 2px; background: #575757; overflow: hidden; flex: none; }
.scene { display: block; width: 1161px; height: 278px; }
.t8 { fill: #eee; font: 13px "Liberation Sans", sans-serif; }
.ax { font: 14px "DejaVu Sans ExtraLight", "DejaVu Sans", sans-serif; }
.az { fill: #1a78f0; } .ay { fill: #10ee10; } .ax-x { fill: #f00; }

.ctrl { position: absolute; left: 10px; top: 3px; width: 166px; height: 177px; background: #fff; box-shadow: 2px 2px 5px rgba(0,0,0,.55); display: flex; flex-direction: column; }
.ctrl-h { height: 31px; line-height: 29px; padding-left: 8px; color: #a8a8a8; flex: none; }
.ctrl-b { flex: 1; border: 2px solid #888; margin: 0 0 0 1px; padding: 1px 0 0 3px; }
.ck { display: flex; align-items: center; height: 12px; gap: 3px; line-height: 12px; color: #000; white-space: nowrap; }
.ck span { margin-top: -2px; }
.cbx { flex: none; width: 11px; height: 11px; border: 1px solid #888; font: 10px/9px "DejaVu Sans", sans-serif; color: #444; text-align: center; background: #fff; }
.cbx-g { width: 12px; height: 12px; border-color: #aaa; }

.snap { height: 24px; width: 262px; margin: 2px 0 0 229px; padding-left: 2px; gap: 4px; flex: none; }
.snap .on { justify-content: flex-start; padding-left: 2px; }
.snap .on + .on { margin-left: -4px; }
.row-o { height: 25px; margin-top: 3px; display: flex; padding-left: 2px; flex: none; }
.o-left { width: 209px; gap: 0; padding-left: 2px; }
.o-left .gr { margin-right: 1px; }
.o-right { width: 409px; margin-left: 267px; padding-left: 3px; gap: 3px; }
.lbl { color: #999; flex: none; }
.spin { flex: none; height: 23px; border: 1px solid #808080; background: #f2f2f2; color: #999; display: flex; align-items: center; justify-content: flex-end; text-align: right; font-size: 13px; }
.w58 { width: 58px; }
.w67 { width: 67px; }
.sbtns { width: 17px; font-size: 8px; line-height: 8px; color: #555; text-align: center; flex: none; }
.rot { flex: none; margin: 0 -1px 0 5px; }

.editor { margin-top: 7px; display: flex; height: 198px; flex: none; }
.ed-grip { width: 13px; flex: none; display: flex; flex-direction: column; padding-left: 1px; }
.ed-x { width: 11px; height: 13px; flex: none; }
.ed-dots { flex: 1; margin-left: 2px; width: 7px; border-left: 2px dotted #c4c4c4; border-right: 2px dotted #c4c4c4; }
.ed-main { flex: 1; min-width: 0; display: flex; flex-direction: column; }
.ed-bar { height: 22px; margin-top: 1px; padding-left: 4px; gap: 7px; background: #fafafa; flex: none; }
.nav1 { margin: 0 3px 0 -3px; }
.c-g { color: #c0c0c0; }
.c-b { color: #2a6fd0; }
.grid { margin-top: 3px; flex: 1; min-height: 0; border: 1px solid #a8a8a8; border-right: 2px solid #bbb; border-bottom: 2px solid #a8a8a8; background: #f0f0f0; overflow: hidden; margin-right: 1px; }
.grid-top { height: 153px; display: flex; background: #fff; overflow: hidden; }
.tbl { width: 1128px; table-layout: fixed; border-collapse: separate; border-spacing: 0; flex: none; align-self: flex-start; }
.c0 { width: 33px; } .c1 { width: 73px; } .c2 { width: 56px; } .c3 { width: 36px; } .c4 { width: 33px; }
.c5 { width: 201px; } .c6 { width: 166px; } .c7 { width: 156px; } .c8 { width: 61px; } .c9 { width: 38px; }
.c10 { width: 38px; } .c11 { width: 49px; } .c12 { width: 61px; } .c13 { width: 61px; } .c14 { width: 66px; }
.tbl th, .tbl td { border-right: 1px solid #bdbdbd; border-bottom: 1px solid #bdbdbd; padding: 0; font-weight: normal; overflow: hidden; white-space: nowrap; }
.tbl thead th { height: 20px; background: linear-gradient(#fff, #ececec); text-align: center; }
.tbl .hsel { background: linear-gradient(#fadea8, #f5c468); color: #6a0a8a; }
.tbl tbody td { height: 29px; padding: 2px 0 0 2px; }
.tbl tbody td:nth-child(2) { border-right-color: #000; }
.tbl tbody th { height: 29px; background: linear-gradient(#fff, #e6e6e6); text-align: center; font-family: "Liberation Mono", monospace; padding-top: 2px; }
.tbl .g td { background: #c9fdd4; }
.tbl tbody th.rsel { background: #ffd48c; color: #6a0a8a; }
.tbl .g .nsel { background: #aae8d8; }
.tbl tbody .e td { background-color: #fff; height: 17px; padding: 0; }
.tbl tbody .e th { height: 17px; padding: 0; line-height: 17px; background: linear-gradient(#fff, #e6e6e6); }
.tbl tbody td.ct { text-align: center; padding-left: 0; }
.sym { font-size: 11px; }
.tbl tbody td.shape { text-align: center; padding: 0; vertical-align: top; }
.dim { display: block; color: #f00; font: 12px/12px "Liberation Mono", monospace; letter-spacing: -1.2px; margin-top: 6px; }
.bar { display: block; height: 2px; width: 150px; background: #000; margin: 1px 0 0 23px; }
.grid-sb { width: 17px; height: 153px; }
.hsb { height: 16px; display: flex; align-items: center; background: #f0f0f0; }
.hsb-mid { flex: 1; height: 100%; min-width: 0; }
.hsb .arw { margin: 0 3px 0 2px; }
.thumb-h { display: block; height: 100%; width: 726px; background: #cdcdcd; }

/* status */
.status { height: 20px; display: flex; gap: 2px; }
.st { display: block; background: #f5f5f5; border: 1px solid #dcdcdc; border-radius: 1px; line-height: 18px; padding-left: 2px; white-space: nowrap; overflow: hidden; flex: none; }
.st1 { width: 148px; } .st2 { width: 78px; } .st3 { width: 98px; } .st4 { width: 48px; } .st5 { width: 914px; } .st6 { width: 70px; }

/* taskbar */
.taskbar { height: 40px; background: #020c10; color: #fff; display: flex; align-items: stretch; white-space: nowrap; }
.start { width: 48px; background: #000; display: flex; align-items: center; justify-content: center; flex: none; }
.winl { width: 16px; height: 16px; }
.search { width: 344px; background: #333; color: #8c8c8c; display: flex; align-items: center; font-size: 14px; padding-left: 9px; flex: none; }
.cortana { width: 21px; height: 21px; border: 3px solid #ddd; border-radius: 50%; margin-right: 6px; flex: none; }
.tmic { width: 16px; height: 22px; margin-left: auto; margin-right: 13px; }
.tk { width: 49px; flex: none; display: flex; align-items: center; justify-content: center; }
.tk3 { margin-left: 3px; }
.tk6 { margin-left: 6px; }
.ul { box-shadow: inset 0 -2px 0 #76b9ed; }
.act { background: #2f3a40; }
.ti { width: 24px; height: 24px; overflow: visible; }
.tvi { width: 22px; height: 16px; }
.cpu { width: 70px; margin-left: 42px; display: flex; flex-direction: column; align-items: center; justify-content: center; font-size: 12px; line-height: 18px; flex: none; }
.tray { display: flex; align-items: center; gap: 6px; width: 176px; padding-left: 6px; flex: none; }
.caret { width: 14px; height: 8px; margin-right: 3px; }
.tr22 { width: 22px; height: 16px; }
.tr18 { width: 18px; height: 16px; }
.zh { font-size: 14px; font-weight: 700; margin: 0 1px; }
.clock { width: 62px; display: flex; flex-direction: column; align-items: center; justify-content: center; line-height: 19px; flex: none; }
.notif { position: relative; margin-left: 37px; width: 20px; flex: none; }
.nico { position: absolute; left: 0; top: 8px; width: 15px; height: 15px; }
.nbadge { position: absolute; left: 4px; top: 18px; width: 19px; height: 19px; border-radius: 50%; background: #3a3f44; border: 1px solid #999; font-size: 12px; font-weight: 700; line-height: 17px; text-align: center; }
```
